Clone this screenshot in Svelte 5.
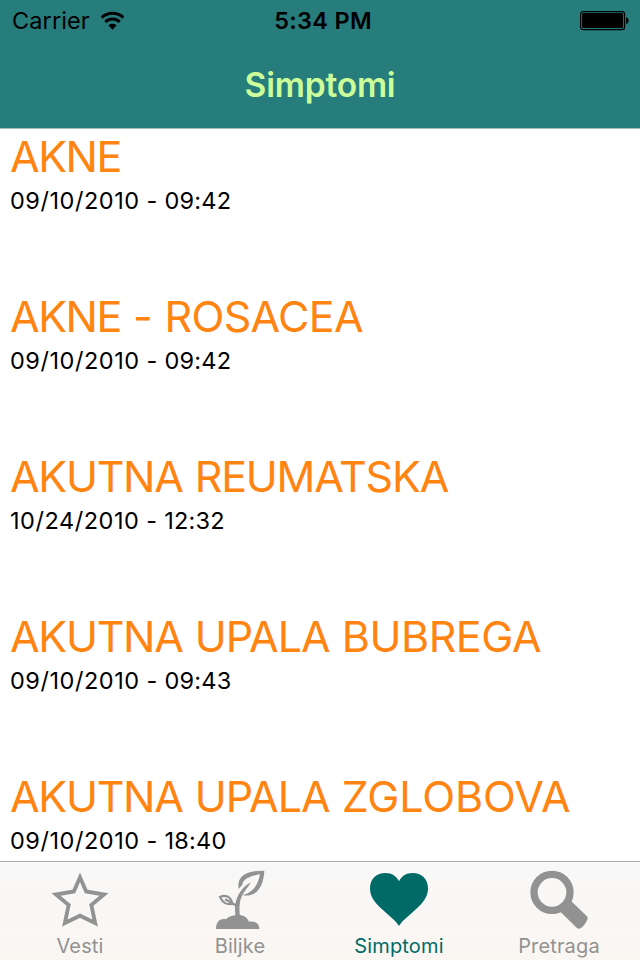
<script>
  const rows = [
    { words: [['AKNE', -1.5]], date: '09/10/2010', time: '09:42' },
    { words: [['AKNE', -1.5], ['-', -0.3], ['ROSACEA', -0.7]], date: '09/10/2010', time: '09:42' },
    { words: [['AKUTNA', -1.3], ['REUMATSKA', -1.2]], date: '10/24/2010', time: '12:32' },
    { words: [['AKUTNA', -1.3], ['UPALA', -1], ['BUBREGA', -0.45]], date: '09/10/2010', time: '09:43' },
    { words: [['AKUTNA', -1.3], ['UPALA', -1], ['ZGLOBOVA', -0.1]], date: '09/10/2010', time: '18:40' }
  ];
  const tabs = [
    { id: 'vesti', label: 'Vesti' },
    { id: 'biljke', label: 'Biljke' },
    { id: 'simptomi', label: 'Simptomi' },
    { id: 'pretraga', label: 'Pretraga' }
  ];
  let active = $state('simptomi');
</script>

<div class="screen">
  <header>
    <div class="status">
      <div class="carrier">
        <span>Carrier</span>
        <svg width="25" height="20" viewBox="0 0 26 20" preserveAspectRatio="none">
          <g fill="none" stroke="#000" stroke-width="3">
            <path d="M1.7 6.6C8 .9 18 .9 24.3 6.6" />
            <path d="M5.5 11C9.7 7.1 16.3 7.1 20.5 11" />
          </g>
          <path d="M8.6 14.2C11 12.1 15 12.1 17.4 14.2L13 18.7Z" />
        </svg>
      </div>
      <div class="time">5:34 PM</div>
      <div class="power">
        <svg width="50" height="20" viewBox="0 0 50 20">
          <rect x=".6" y=".6" width="44" height="18" rx="2.6" fill="none" stroke="#000" stroke-width="1.2" />
          <rect x="2.1" y="2.1" width="41" height="15" rx="1.4" />
          <path d="M46.2 6.2C49.4 7 49.4 12.2 46.2 13Z" />
        </svg>
      </div>
    </div>
    <h1>Simptomi</h1>
  </header>

  <main>
    {#each rows as row}
      <article>
        <h2>
          {#each row.words as [word, tracking], i}{#if i > 0}{' '}{/if}<span style:letter-spacing="{tracking}px">{word}</span>{/each}
        </h2>
        <p><span class="day">{row.date}</span> - {row.time}</p>
      </article>
    {/each}
  </main>

  <nav>
    {#each tabs as tab}
      <button class={tab.id} class:active={active === tab.id} onclick={() => (active = tab.id)}>
        <svg width="60" height="62" viewBox="0 0 180 186">
          {#if tab.id === 'vesti'}
            <path d="M90 31L108.500 73.500L162 82.500L124 114L135.500 168L90 146L44.500 168L56 114L18 82.500L71.500 73.500Z" fill="none" stroke="currentColor" stroke-width="11.500" stroke-miterlimit="10" />
          {:else if tab.id === 'biljke'}
            <path d="M18 186C18 165 30 152 48 157C56 147 74 144 84 144C102 144 112 152 117 164C136 161 148 170 148 186Z" fill="currentColor" />
            <path d="M76 150C77 137 73 125 76 111C81 87 94 61 123 46C111 65 98 78 92 97C87 115 88 136 91 150Z" fill="currentColor" />
            <path fill-rule="evenodd" d="M86 66C80 30 105 10 163 11C161 55 143 91 97 85C128 77 143 57 150 22C119 27 98 38 97 53Z" fill="currentColor" />
            <path d="M30 90C43 83 63 86 67 111C49 113 39 109 30 90Z" fill="none" stroke="currentColor" stroke-width="6.500" />
            <path d="M45 97C57 101 63 108 80 116" fill="none" stroke="currentColor" stroke-width="7" />
          {:else if tab.id === 'simptomi'}
            <path d="M87 177C80 165 63 151 43 133C15 108 0 91 0 64C0 35 20 18 46 18C66 18 80 28 87 43C94 28 108 18 128 18C154 18 174 35 174 64C174 91 159 108 131 133C111 151 94 165 87 177Z" fill="currentColor" />
          {:else}
            <circle cx="66" cy="76" r="54" fill="none" stroke="currentColor" stroke-width="22" />
            <path d="M91 134L124 103L170 147C174 151 174 155 171 160C166 171 161 178 153 183C148 186 144 186 140 182Z" fill="currentColor" />
          {/if}
        </svg>
        <span>{tab.label}</span>
      </button>
    {/each}
  </nav>
</div>

<style>
  .screen {
    width: 640px;
    height: 960px;
    overflow: hidden;
    display: flex;
    flex-direction: column;
    background: #fff;
    color: #000;
    font-family: Inter, "Liberation Sans", sans-serif;
  }
  header {
    flex: none;
    height: 129px;
    box-sizing: border-box;
    padding-top: 1px;
    border-bottom: 1px solid #a3bcba;
    background: #277c7c;
  }
  .status {
    height: 40px;
    display: grid;
    grid-template-columns: 1fr auto 1fr;
    align-items: center;
    padding: 0 10px 0 12px;
    font-size: 23.5px;
    line-height: 40px;
  }
  .carrier {
    display: flex;
    align-items: center;
    gap: 10px;
    letter-spacing: .1px;
  }
  .time { padding-left: 4px; font-weight: 600; letter-spacing: .3px; }
  .power { display: flex; justify-content: flex-end; }
  svg { display: block; flex: none; overflow: visible; }
  h1 {
    margin: 0;
    text-align: center;
    color: #ccff99;
    font-size: 33.5px;
    line-height: 88px;
    font-weight: 600;
    letter-spacing: -.2px;
  }
  main { flex: none; height: 732px; overflow: hidden; }
  article {
    height: 160px;
    box-sizing: border-box;
    padding: 2px 10px 0;
    white-space: nowrap;
  }
  h2 {
    margin: 0;
    color: #ff8412;
    font-size: 43px;
    line-height: 50px;
    font-weight: 400;
  }
  p { margin: 4px 0 0; font-size: 23.5px; line-height: 31px; letter-spacing: .25px; }
  .day { letter-spacing: .54px; }
  nav {
    flex: none;
    height: 99px;
    box-sizing: border-box;
    border-top: 1px solid #acacac;
    display: grid;
    grid-template-columns: repeat(4, 160px);
    background: linear-gradient(#f8f8f8, #faf6f2);
  }
  button {
    display: flex;
    flex-direction: column;
    align-items: center;
    padding: 5px 0 0;
    border: 0;
    background: none;
    color: #929292;
    font: 400 20px/34px Inter, "Liberation Sans", sans-serif;
    letter-spacing: .15px;
  }
  .simptomi span, .pretraga span { margin-right: 2px; }
  button.active { color: #006b66; }
</style>
